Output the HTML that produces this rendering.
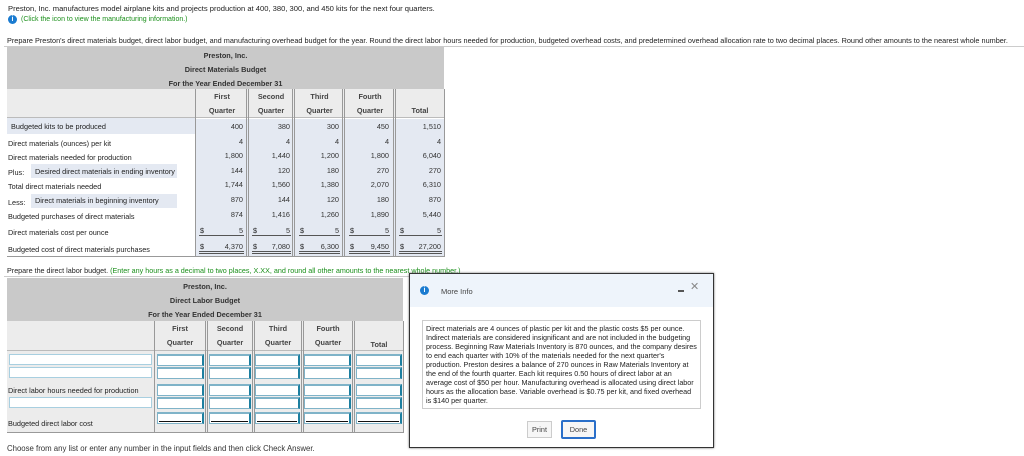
<!DOCTYPE html>
<html><head><meta charset="utf-8"><style>
*{margin:0;padding:0;box-sizing:border-box}
body{width:1024px;height:456px;background:#fff;font-family:"Liberation Sans",Arial,sans-serif;font-size:7.3px;color:#222;position:relative;overflow:hidden}
.a{position:absolute;white-space:nowrap}
.g{color:#1a8f1a}
.hd{background:#c9c9c9;text-align:center;font-weight:bold;color:#333}
.col{position:absolute;background:#e4e9f2}
.vl{position:absolute;width:3px;border-left:1px solid #999;border-right:1px solid #999}
.num{position:absolute;text-align:right;color:#333}
.in{position:absolute;background:#fff;border:1px solid #7fb3c8;border-right:2px solid #1d7fa0;border-top:2px solid #7fb3c8}
.inl{position:absolute;background:#fff;border:1px solid #a8cfe0}
.qh{position:absolute;text-align:center;font-weight:bold;color:#444;line-height:14px;white-space:nowrap}
</style></head><body>
<div class="a" style="left:8px;top:4px;font-size:7.6px">Preston, Inc. manufactures model airplane kits and projects production at 400, 380, 300, and 450 kits for the next four quarters.</div>
<div class="a" style="left:8px;top:15px;width:9px;height:9px;border-radius:50%;background:#1a7bd0;color:#fff;font-weight:bold;font-size:7px;text-align:center;line-height:9px">i</div>
<div class="a g" style="left:21px;top:16px;font-size:7px">(Click the icon to view the manufacturing information.)</div>
<div class="a" style="left:7px;top:36px;font-size:7.3px">Prepare Preston's direct materials budget, direct labor budget, and manufacturing overhead budget for the year. Round the direct labor hours needed for production, budgeted overhead costs, and predetermined overhead allocation rate to two decimal places. Round other amounts to the nearest whole number.</div>
<div class="a" style="left:4px;top:46px;width:1020px;height:1px;background:#ccc"></div>

<!-- Table 1 -->
<div class="a hd" style="left:7px;top:47px;width:437px;height:42px;line-height:14px;padding-top:2px">Preston, Inc.<br>Direct Materials Budget<br>For the Year Ended December 31</div>
<div class="a" style="left:7px;top:89px;width:437px;height:29px;background:#ececec;border-bottom:1px solid #bbb"></div>
<div class="a" style="left:7px;top:118px;width:188px;height:16px;background:#e4e9f2"></div>
<div class="a" style="left:31px;top:164px;width:146px;height:14px;background:#e4e9f2"></div>
<div class="a" style="left:31px;top:194px;width:146px;height:14px;background:#e4e9f2"></div>
<div class="col" style="left:196px;top:119px;width:248px;height:137px"></div>
<div class="a" style="left:195px;top:89px;width:1px;height:167px;background:#999"></div>
<div class="vl" style="left:246px;top:89px;height:167px"></div>
<div class="vl" style="left:292px;top:89px;height:167px"></div>
<div class="vl" style="left:342px;top:89px;height:167px"></div>
<div class="vl" style="left:393px;top:89px;height:167px"></div>
<div class="a" style="left:444px;top:89px;width:1px;height:167px;background:#999"></div>
<div class="a" style="left:7px;top:256px;width:438px;height:1px;background:#999"></div>
<div class="qh" style="left:196px;top:90px;width:52px">First<br>Quarter</div>
<div class="qh" style="left:249px;top:90px;width:44px">Second<br>Quarter</div>
<div class="qh" style="left:296px;top:90px;width:47px">Third<br>Quarter</div>
<div class="qh" style="left:346px;top:90px;width:48px">Fourth<br>Quarter</div>
<div class="qh" style="left:396px;top:104px;width:48px">Total</div>

<div class="a" style="left:11px;top:122px">Budgeted kits to be produced</div>
<div class="a" style="left:8px;top:139px">Direct materials (ounces) per kit</div>
<div class="a" style="left:8px;top:153px">Direct materials needed for production</div>
<div class="a" style="left:8px;top:168px">Plus:</div><div class="a" style="left:35px;top:167px">Desired direct materials in ending inventory</div>
<div class="a" style="left:8px;top:182px">Total direct materials needed</div>
<div class="a" style="left:8px;top:198px">Less:</div><div class="a" style="left:35px;top:196px">Direct materials in beginning inventory</div>
<div class="a" style="left:8px;top:212px">Budgeted purchases of direct materials</div>
<div class="a" style="left:8px;top:228px">Direct materials cost per ounce</div>
<div class="a" style="left:8px;top:245px">Budgeted cost of direct materials purchases</div>

<div id="nums"></div>
<script>
var cols=[[196,243],[249,290],[296,339],[346,389],[396,441]];
var rows=[[122,["400","380","300","450","1,510"]],[137,["4","4","4","4","4"]],[151,["1,800","1,440","1,200","1,800","6,040"]],[166,["144","120","180","270","270"]],[180,["1,744","1,560","1,380","2,070","6,310"]],[195,["870","144","120","180","870"]],[210,["874","1,416","1,260","1,890","5,440"]]];
var h="";
rows.forEach(function(r){cols.forEach(function(c,i){h+='<div class="num" style="left:'+c[0]+'px;width:'+(c[1]-c[0])+'px;top:'+r[0]+'px">'+r[1][i]+'</div>';});});
var d1=["5","5","5","5","5"],d2=["4,370","7,080","6,300","9,450","27,200"];
cols.forEach(function(c,i){
 h+='<div class="a" style="left:'+(c[0]+4)+'px;top:226px">$</div><div class="num" style="left:'+c[0]+'px;width:'+(c[1]-c[0])+'px;top:226px">'+d1[i]+'</div>';
 h+='<div class="a" style="left:'+(c[0]+3)+'px;top:235px;width:'+(c[1]-c[0]-2)+'px;height:1px;background:#555"></div>';
 h+='<div class="a" style="left:'+(c[0]+4)+'px;top:242px">$</div><div class="num" style="left:'+c[0]+'px;width:'+(c[1]-c[0])+'px;top:242px">'+d2[i]+'</div>';
 h+='<div class="a" style="left:'+(c[0]+3)+'px;top:251px;width:'+(c[1]-c[0]-2)+'px;height:3px;border-top:1px solid #555;border-bottom:1px solid #555"></div>';
});
document.getElementById("nums").innerHTML=h;
</script>

<div class="a" style="left:7px;top:266px;font-size:7.2px">Prepare the direct labor budget. <span class="g">(Enter any hours as a decimal to two places, X.XX, and round all other amounts to the nearest whole number.)</span></div>
<div class="a" style="left:4px;top:276px;width:405px;height:1px;background:#ccc"></div>

<!-- Table 2 -->
<div class="a hd" style="left:7px;top:278px;width:396px;height:43px;line-height:14px;padding-top:2px">Preston, Inc.<br>Direct Labor Budget<br>For the Year Ended December 31</div>
<div class="a" style="left:7px;top:321px;width:396px;height:111px;background:#ececec"></div>
<div class="a" style="left:7px;top:350px;width:396px;height:1px;background:#bbb"></div>
<div class="a" style="left:154px;top:321px;width:1px;height:111px;background:#999"></div>
<div class="vl" style="left:205px;top:321px;height:111px"></div>
<div class="vl" style="left:252px;top:321px;height:111px"></div>
<div class="vl" style="left:301px;top:321px;height:111px"></div>
<div class="vl" style="left:352px;top:321px;height:111px"></div>
<div class="a" style="left:403px;top:321px;width:1px;height:111px;background:#999"></div>
<div class="a" style="left:7px;top:432px;width:397px;height:1px;background:#999"></div>
<div class="qh" style="left:155px;top:322px;width:50px">First<br>Quarter</div>
<div class="qh" style="left:208px;top:322px;width:44px">Second<br>Quarter</div>
<div class="qh" style="left:255px;top:322px;width:46px">Third<br>Quarter</div>
<div class="qh" style="left:304px;top:322px;width:48px">Fourth<br>Quarter</div>
<div class="qh" style="left:355px;top:338px;width:48px">Total</div>
<div class="inl" style="left:9px;top:354px;width:143px;height:11px"></div>
<div class="inl" style="left:9px;top:367px;width:143px;height:11px"></div>
<div class="a" style="left:8px;top:386px">Direct labor hours needed for production</div>
<div class="inl" style="left:9px;top:397px;width:143px;height:11px"></div>
<div class="a" style="left:8px;top:419px">Budgeted direct labor cost</div>
<div id="ins"></div>
<script>
var c2=[[157,204],[209,251],[255,300],[304,351],[356,402]],ys=[354,367,384,397,412],g="";
c2.forEach(function(c){ys.forEach(function(y,j){g+='<div class="in" style="left:'+c[0]+'px;top:'+y+'px;width:'+(c[1]-c[0])+'px;height:12px"></div>';});
g+='<div class="a" style="left:'+(c[0]+2)+'px;top:421px;width:'+(c[1]-c[0]-5)+'px;height:1px;background:#111"></div>';});
document.getElementById("ins").innerHTML=g;
</script>

<div class="a" style="left:7px;top:444px;font-size:7.8px;color:#333">Choose from any list or enter any number in the input fields and then click Check Answer.</div>

<!-- Modal -->
<div class="a" style="left:409px;top:273px;width:305px;height:175px;background:#fff;border:1px solid #333;box-shadow:0 0 2px #666"></div>
<div class="a" style="left:410px;top:274px;width:303px;height:33px;background:#eef4fb"></div>
<div class="a" style="left:420px;top:286px;width:9px;height:9px;border-radius:50%;background:#1a7bd0;color:#fff;font-weight:bold;font-size:7px;text-align:center;line-height:9px">i</div>
<div class="a" style="left:441px;top:287px;font-size:7.5px;color:#444">More Info</div>
<div class="a" style="left:678px;top:290px;width:6px;height:2px;background:#555"></div>
<div class="a" style="left:690px;top:280px;font-size:11px;color:#888">✕</div>
<div class="a" style="left:422px;top:320px;width:279px;height:89px;border:1px solid #ccc;padding:3px 3px;white-space:normal;font-size:7.2px;line-height:9px;color:#222">Direct materials are 4 ounces of plastic per kit and the plastic costs $5 per ounce. Indirect materials are considered insignificant and are not included in the budgeting process. Beginning Raw Materials Inventory is 870 ounces, and the company desires to end each quarter with 10% of the materials needed for the next quarter's production. Preston desires a balance of 270 ounces in Raw Materials Inventory at the end of the fourth quarter. Each kit requires 0.50 hours of direct labor at an average cost of $50 per hour. Manufacturing overhead is allocated using direct labor hours as the allocation base. Variable overhead is $0.75 per kit, and fixed overhead is $140 per quarter.</div>
<div class="a" style="left:527px;top:421px;width:25px;height:17px;border:1px solid #ccc;background:#f6f6f6;text-align:center;line-height:15px;font-size:7.3px;color:#444">Print</div>
<div class="a" style="left:561px;top:420px;width:35px;height:19px;border:2px solid #2a6fc9;background:#f6f6f6;text-align:center;line-height:15px;font-size:7.3px;color:#444;border-radius:2px">Done</div>
</body></html>
